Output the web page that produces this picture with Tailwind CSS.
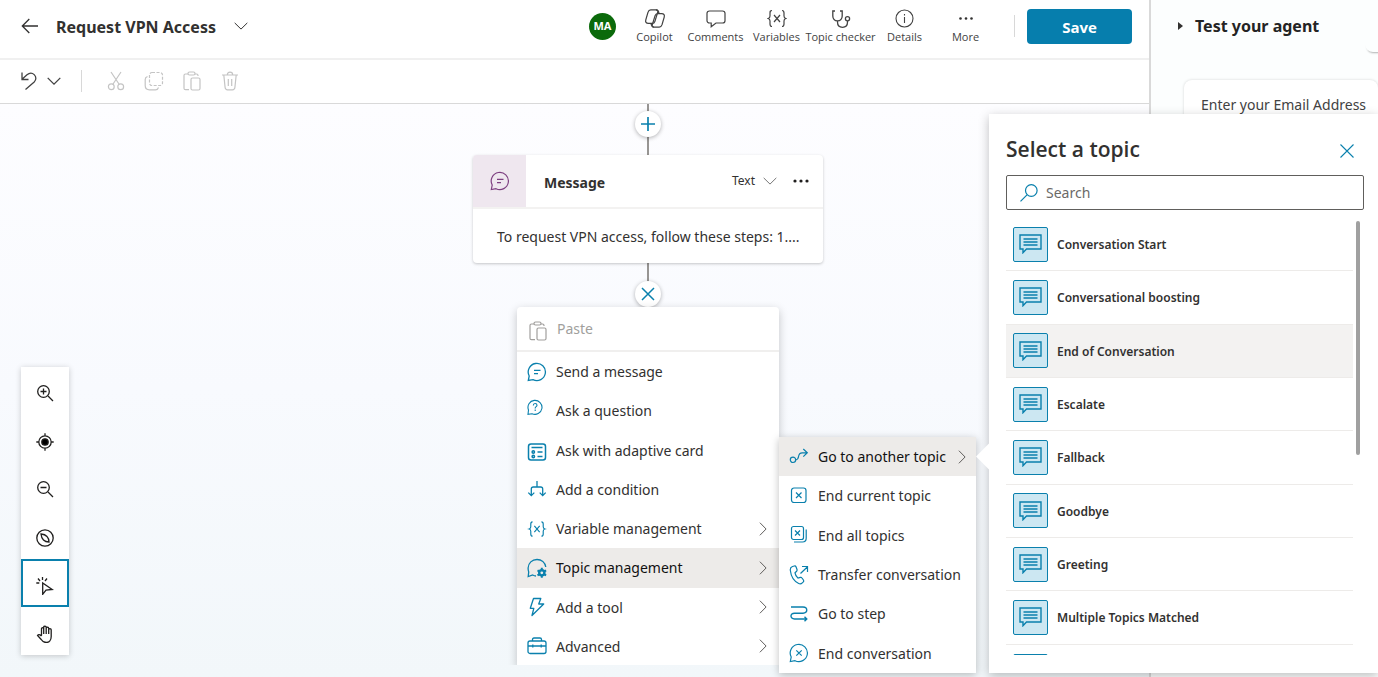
<!DOCTYPE html>
<html lang="en">
<head>
<meta charset="utf-8">
<meta name="viewport" content="width=device-width, initial-scale=1">
<title>Request VPN Access</title>
<script src="https://cdn.jsdelivr.net/npm/@tailwindcss/browser@4"></script>
</head>
<body class="relative flex h-screen overflow-hidden bg-white font-['Noto_Sans','Open_Sans',sans-serif] text-[#323130]">

<svg class="hidden" aria-hidden="true">
  <symbol id="chev-down" viewBox="0 0 14 8"><path d="M.7.9 7 7.1 13.3.9" /></symbol>
  <symbol id="chev-right" viewBox="0 0 8 14"><path d="M.9.7 7.1 7 .9 13.3" /></symbol>
  <symbol id="paste" viewBox="0 0 18 20"><path d="M5 3H2.5C1.7 3 1 3.7 1 4.5v12.700c0 .8.7 1.500 1.500 1.500H6M12 3h1.500c.8 0 1.500.7 1.500 1.500V5"/><rect x="5" y="1" width="7" height="3" rx="1.500"/><rect x="8" y="7" width="9" height="12" rx="1.500"/></symbol>
  <symbol id="message" viewBox="0 0 20 20"><path d="M1.300 18.500 2.200 14A8.600 8.600 0 1 1 6 17.700L1.300 18.500ZM7 8.300h6.500M7 11.700h4"/></symbol>
  <symbol id="vars" viewBox="0 0 20 18"><path d="M5 1C3.200 1 3 2 3 3.500v3C3 8 2.300 8.700 1.200 9 2.300 9.300 3 10 3 11.500v3C3 16 3.200 17 5 17M15 1c1.800 0 2 1 2 2.500v3c0 1.500.7 2.200 1.800 2.500-1.100.3-1.800 1-1.800 2.500v3c0 1.500-.2 2.500-2 2.500M7 5.500l6 7M13 5.500l-6 7"/></symbol>
  <symbol id="topic" viewBox="0 0 23 20"><path d="M1 1h21v14H7.500L4 18.700V15H1Z"/><path d="M4.500 5h14M4.500 8h14M4.500 11h14"/></symbol>
</svg>

<div class="flex min-w-0 flex-1 flex-col">
  <header class="flex h-[60px] shrink-0 items-center border-b-2 border-[#f0f0f0] pr-[17px] pb-1.5 pl-[21px]">
    <button aria-label="Back"><svg class="h-4 w-[18px] fill-none stroke-[#323130]" viewBox="0 0 18 16"><path d="M17 8H1.500M8.300 1 1.300 8l7 7" stroke-width="1.300"/></svg></button>
    <h1 class="ml-[17px] pt-0.5 text-[16px] font-bold whitespace-nowrap">Request VPN Access</h1>
    <button class="ml-[18px]" aria-label="Topic options"><svg class="h-2 w-3.5 fill-none stroke-[#323130]"><use href="#chev-down"/></svg></button>
    <div class="ml-auto flex items-center">
      <span class="mr-2 flex size-[27px] items-center justify-center rounded-full bg-[#0b6a0b] text-[11px] font-bold text-white">MA</span>
      <nav class="flex pt-0.5 font-['Open_Sans',sans-serif] text-[11px] leading-4 whitespace-nowrap text-[#424242]">
        <button class="flex w-[61px] flex-col items-center gap-px"><svg class="h-[19px] w-[22px] fill-none stroke-[#424242]" viewBox="0 0 22 20" stroke-width="1.300"><path d="M6.500 1h6c1.400 0 1.800.9 1.400 2.300l-3 9.700c-.5 1.600-1.300 2.200-2.700 2.200H4c-2.400 0-3.300-1.500-2.700-3.700l2.300-8C4.100 1.900 5 1 6.500 1Z"/><path d="M15.500 19h-6c-1.400 0-1.800-.9-1.400-2.300l3-9.700c.5-1.600 1.300-2.200 2.700-2.200H18c2.400 0 3.300 1.500 2.700 3.700l-2.300 8c-.5 1.600-1.400 2.500-2.900 2.500Z"/><path d="M12 1c2.200 0 2.700 1 3.300 3.800M10 19c-2.200 0-2.700-1-3.300-3.800"/></svg>Copilot</button>
        <button class="flex w-[61px] flex-col items-center gap-px"><svg class="h-[19px] w-[20px] fill-none stroke-[#424242]" viewBox="0 0 20 19" stroke-width="1.200"><path d="M3.500 2h13C17.900 2 19 3.100 19 4.300v7.400c0 1.200-1.100 2.300-2.500 2.300H10l-4.800 3.700V14H3.500C2.100 14 1 12.900 1 11.700V4.300C1 3.100 2.100 2 3.500 2Z"/></svg>Comments</button>
        <button class="flex w-[61px] flex-col items-center gap-px"><svg class="h-[19px] w-[20px] fill-none stroke-[#424242]" stroke-width="1.200"><use href="#vars"/></svg>Variables</button>
        <button class="flex w-[67px] flex-col items-center gap-px"><svg class="h-[19px] w-[20px] fill-none stroke-[#424242]" viewBox="0 0 20 19" stroke-width="1.300"><path d="M4 2H1.800v5c0 2.800 1.900 4.800 4.700 4.800s4.700-2 4.700-4.800V2H9M6.500 11.800V13c0 3 1.700 5.300 5 5.300s5-2.300 5-5.300v-1"/><circle cx="16.500" cy="9.800" r="2.100"/></svg>Topic checker</button>
        <button class="flex w-[61px] flex-col items-center gap-px"><svg class="h-[19px] w-[19px] fill-none stroke-[#424242]" viewBox="0 0 19 19" stroke-width="1.100"><circle cx="9.500" cy="9.500" r="8.500"/><path d="M9.500 8v6M9.500 5v1.500"/></svg>Details</button>
        <button class="flex w-[61px] flex-col items-center gap-px"><svg class="h-[19px] w-[16px] fill-[#323130]" viewBox="0 0 16 19"><circle cx="2.500" cy="9.500" r="1.300"/><circle cx="8" cy="9.500" r="1.300"/><circle cx="13.500" cy="9.500" r="1.300"/></svg>More</button>
      </nav>
      <div class="mr-3 ml-[18px] h-[22px] w-px bg-[#d8d8d8]"></div>
      <button class="h-[35px] w-[105px] rounded bg-[#067ead] pt-0.5 font-['Open_Sans',sans-serif] text-[15px] font-bold text-white">Save</button>
    </div>
  </header>

  <div class="flex h-11 shrink-0 items-center border-b border-[#d9d9d9] pb-0.5 pl-[21px]">
    <button aria-label="Undo"><svg class="h-[18px] w-4 fill-none stroke-[#424242]" viewBox="0 0 16 18" stroke-width="1.300"><path d="M1 .5v7h6.500M1.300 7 6 2.800c2.300-2 5.300-2 7.200-.2 2.200 2.100 2.200 5.300 0 7.400L4.500 17.500"/></svg></button>
    <button class="ml-2.5" aria-label="Undo history"><svg class="h-2 w-3.5 fill-none stroke-[#424242]" stroke-width="1.300"><use href="#chev-down"/></svg></button>
    <div class="mr-6 ml-5 h-[22px] w-px bg-[#d8d8d8]"></div>
    <div class="flex gap-[18px]">
      <button class="flex w-5 justify-center" disabled aria-label="Cut"><svg class="h-5 w-[18px] fill-none stroke-[#c4c4c4]" viewBox="0 0 18 20" stroke-width="1.200"><path d="m4 1 8.300 12.500M14 1 5.700 13.500"/><circle cx="4.300" cy="15.800" r="2.900"/><circle cx="13.700" cy="15.800" r="2.900"/></svg></button>
      <button class="flex w-5 justify-center" disabled aria-label="Copy"><svg class="h-5 w-5 fill-none stroke-[#c4c4c4]" viewBox="0 0 20 20" stroke-width="1.200"><rect x="5.500" y="1.500" width="13" height="13" rx="2.500" stroke-dasharray="3 1.500"/><path d="M3.500 5.500C2 6 1.200 7 1.200 8.500v6c0 2.500 1.800 4.300 4.300 4.300h6c1.500 0 2.500-.8 3-2.300"/></svg></button>
      <button class="flex w-5 justify-center" disabled aria-label="Paste"><svg class="h-5 w-[18px] fill-none stroke-[#c4c4c4]" stroke-width="1.200"><use href="#paste"/></svg></button>
      <button class="flex w-5 justify-center" disabled aria-label="Delete"><svg class="h-5 w-[18px] fill-none stroke-[#c4c4c4]" viewBox="0 0 18 20" stroke-width="1.200"><path d="M1 4h16M6.300 4c0-1.800 1-2.800 2.700-2.800s2.700 1 2.700 2.800M2.800 4l1.300 12.500c.2 1.500 1 2.300 2.400 2.300h5c1.400 0 2.200-.8 2.400-2.300L15.200 4M7.300 8v7M10.700 8v7"/></svg></button>
    </div>
  </div>

  <!-- Authoring canvas: nodes sit at free coordinates -->
  <main class="relative min-h-0 flex-1 bg-linear-to-b from-[#fdfdff] via-[#f8fafe] to-[#f2f7fa]">
    <div class="absolute inset-x-0 top-0 bottom-3 overflow-hidden">
      <div class="absolute top-0 left-[647px] h-[200px] w-0.5 bg-[#979593]"></div>
      <button class="absolute top-[7px] left-[635px] flex size-[26px] items-center justify-center rounded-full bg-white shadow-[0_1px_4px_rgba(0,0,0,0.3)]" aria-label="Add node"><svg class="size-3.5 stroke-[#0a80ad]" viewBox="0 0 14 14" stroke-width="1.700"><path d="M7 0v14M0 7h14"/></svg></button>

      <article class="absolute top-[51px] left-[473px] w-[350px] rounded bg-white shadow-[0_1px_3px_rgba(0,0,0,0.22)]">
        <div class="flex h-[54px] items-center border-b-2 border-[#f3f2f1]">
          <span class="flex h-full w-[53px] items-center justify-center rounded-tl bg-[#efe7ef]"><svg class="size-5 fill-none stroke-[#7d3f80]" stroke-width="1.200"><use href="#message"/></svg></span>
          <h2 class="ml-[18px] pt-0.5 text-[14px] font-bold">Message</h2>
          <button class="ml-auto flex items-center gap-2 text-[12px]">Text <svg class="h-2 w-3.5 fill-none stroke-[#767676]"><use href="#chev-down"/></svg></button>
          <button class="mr-3.5 ml-4" aria-label="More options"><svg class="h-4 w-4 fill-[#201f1e]" viewBox="0 0 16 16"><circle cx="2" cy="8" r="1.600"/><circle cx="8" cy="8" r="1.600"/><circle cx="14" cy="8" r="1.600"/></svg></button>
        </div>
        <p class="h-[54px] truncate pl-6 text-[14px] leading-[56px]">To request VPN access, follow these steps: 1....</p>
      </article>

      <button class="absolute top-[177px] left-[635px] flex size-[26px] items-center justify-center rounded-full bg-white shadow-[0_1px_4px_rgba(0,0,0,0.3)]" aria-label="Close menu"><svg class="size-3.5 stroke-[#0a80ad]" viewBox="0 0 14 14" stroke-width="1.500"><path d="m1 1 12 12M13 1 1 13"/></svg></button>

      <div class="absolute top-[203px] left-[517px] w-[262px] rounded-t-sm bg-white text-[14px] shadow-[0_3px_10px_rgba(0,0,0,0.22)]">
        <button class="flex h-[45px] w-full items-center gap-2.5 border-b-2 border-[#f0efee] pl-3 text-[#a19f9d]" disabled><svg class="mt-1 h-5 w-[18px] fill-none stroke-[#a19f9d]" stroke-width="1.200"><use href="#paste"/></svg>Paste</button>
        <div class="grid h-[314px] grid-rows-8 fill-none stroke-[#0a80ad] stroke-[1.3]">
          <button class="flex items-center gap-[9px] pr-3 pl-2.5"><svg class="size-5"><use href="#message"/></svg>Send a message</button>
          <button class="flex items-center gap-[9px] pr-3 pl-2.5"><svg class="mb-1 size-5" viewBox="0 0 20 20" stroke-width="1.100"><path d="M1 15.300 1.500 11A7 7 0 1 1 5 14.700L1 15.300Z"/><path d="M6.300 6.500C6.300 5.200 7 4.500 8.100 4.500s1.900.7 1.900 1.700c0 1.300-1.800 1.500-1.800 2.900v.4M8.200 10.600v1.300"/></svg>Ask a question</button>
          <button class="flex items-center gap-[9px] pr-3 pl-2.5"><svg class="mt-1 size-5" viewBox="0 0 20 20" stroke-width="1.500"><rect x="1.500" y="2" width="17" height="16" rx="2.500"/><path d="M4.500 5.500h11M10.500 10h5M10.500 14.500h5"/><circle cx="6.300" cy="10" r="1.200"/><circle cx="6.300" cy="14.500" r="1.200"/></svg>Ask with adaptive card</button>
          <button class="flex items-center gap-[9px] pr-3 pl-2.5"><svg class="size-5" viewBox="0 0 20 20"><path d="M10 2v6M4.300 16.500V10c0-1.300.7-2 2-2h7.400c1.300 0 2 .7 2 2v6.500M1.300 13.600l3 3 3-3M12.700 13.600l3 3 3-3"/></svg>Add a condition</button>
          <button class="flex items-center gap-[9px] pr-3 pl-2.5"><svg class="h-4 w-5"><use href="#vars"/></svg>Variable management<svg class="ml-auto h-3.5 w-2 stroke-[#605e5c] stroke-1"><use href="#chev-right"/></svg></button>
          <button class="flex items-center gap-[9px] bg-[#edebe9] pr-3 pl-2.5 text-[#111]"><svg class="size-5" viewBox="0 0 20 20"><path d="M9 18c-1.200-.1-2.300-.5-3.300-1L1.200 18.500l.5-4.500c-.4-1-.6-2.500-.6-4 .2-5 4-8.500 8.900-8.500 4.500 0 8 3 8.800 7.500"/><circle cx="14.800" cy="14.800" r="2.600" fill="#edebe9" stroke-width="2.400"/><path d="M14.800 9.800v2M14.800 17.800v2M10.500 12.300l1.700 1M17.400 16.300l1.700 1M10.500 17.300l1.700-1M17.400 13.300l1.700-1" stroke-width="2"/></svg>Topic management<svg class="ml-auto h-3.5 w-2 stroke-[#605e5c] stroke-1"><use href="#chev-right"/></svg></button>
          <button class="flex items-center gap-[9px] pr-3 pl-2.5"><svg class="size-5" viewBox="0 0 20 20"><path d="M6.500 1.500h7.300L11.700 7h5L5 18.500l1.800-7.200H3.300L6.500 1.500Z" stroke-linejoin="round"/></svg>Add a tool<svg class="ml-auto h-3.5 w-2 stroke-[#605e5c] stroke-1"><use href="#chev-right"/></svg></button>
          <button class="flex items-center gap-[9px] pr-3 pl-2.5"><svg class="size-5" viewBox="0 0 20 20"><rect x="1" y="5" width="18" height="12.500" rx="2"/><path d="M5.500 5V3.500c0-1 .5-1.500 1.500-1.500h6c1 0 1.500.5 1.500 1.500V5M1 10h18M5.800 8.500v3M14.200 8.500v3"/></svg>Advanced<svg class="ml-auto h-3.5 w-2 stroke-[#605e5c] stroke-1"><use href="#chev-right"/></svg></button>
        </div>
      </div>

      <div class="absolute top-[263px] left-[21px] flex w-12 flex-col bg-white fill-none stroke-[#201f1e] stroke-[1.3] shadow-[0_1px_6px_rgba(0,0,0,0.2)]">
        <button class="flex h-12 items-center justify-center pt-1" aria-label="Zoom in"><svg class="size-[18px]" viewBox="0 0 18 18"><circle cx="7.500" cy="7.500" r="5.800"/><path d="m12 12 5 5M4.500 7.500h6M7.500 4.500v6"/></svg></button>
        <button class="flex h-12 items-center justify-center pt-1.5" aria-label="Center"><svg class="size-[18px]" viewBox="0 0 18 18"><circle cx="9" cy="9" r="6.200"/><circle cx="9" cy="9" r="3.200" class="fill-black"/><path d="M9 .3v2.500M9 15.200v2.500M.3 9h2.500M15.200 9h2.500"/></svg></button>
        <button class="flex h-12 items-center justify-center pt-1" aria-label="Zoom out"><svg class="size-[18px]" viewBox="0 0 18 18"><circle cx="7.500" cy="7.500" r="5.800"/><path d="m12 12 5 5M4.500 7.500h6"/></svg></button>
        <button class="flex h-12 items-center justify-center pt-1.5" aria-label="Minimap"><svg class="size-[18px]" viewBox="0 0 18 18"><circle cx="9" cy="9" r="8.200"/><path d="M5 5c3.500.3 4.800 1.200 6 2.500 1.200 1.200 1.900 3 2 5.500-2.500 0-4.300-.8-5.500-2C6.200 9.700 5.300 8.500 5 5Z"/></svg></button>
        <button class="flex h-12 items-center justify-center border-2 border-[#0a80ad] pt-1.5" aria-label="Select"><svg class="size-[18px]" viewBox="0 0 18 18"><path d="M6.700 6v11.300l3.300-4.200 6.200-.6L6.700 6Z"/><path d="M6.500 0v3M2 1.500l2 2.500M11 1.500 9 4M.3 6h3"/></svg></button>
        <button class="flex h-12 items-center justify-center pt-1.5" aria-label="Pan"><svg class="size-[18px]" viewBox="0 0 18 18"><path d="M5.500 10.500V3.700c0-1.500 2.200-1.500 2.200 0V2.200c0-1.500 2.500-1.500 2.500 0v1c0-1.500 2.500-1.500 2.500 0v1.500c0-1.500 2.500-1.500 2.500 0v6.800c0 3.500-2 6-5 6-2.300 0-3.700-1-5-3L1.500 10.500c.8-1.300 2.500-1.200 4 .7M7.700 3.700V9M10.200 3V9M12.700 4.500V9"/></svg></button>
      </div>
    </div>

    <!-- Topic management submenu -->
    <div class="absolute top-[333px] left-[779px] grid h-[236px] w-[197px] grid-rows-6 bg-white fill-none stroke-[#0a80ad] stroke-[1.2] text-[14px] whitespace-nowrap shadow-[0_2px_8px_rgba(0,0,0,0.25)]">
      <button class="flex items-center gap-[9px] bg-[#edebe9] pr-2.5 pl-2.5 text-[#111]"><svg class="size-5 shrink-0" viewBox="0 0 20 20"><circle cx="4" cy="12.800" r="2.700"/><path d="M6.700 12.800c5 0 .5-7 6.500-7H18M14.300 2l4 3.800-4 3.800"/></svg>Go to another topic<svg class="ml-auto h-3.5 w-2 shrink-0 stroke-[#605e5c] stroke-1"><use href="#chev-right"/></svg></button>
      <button class="flex items-center gap-[9px] pl-2.5"><svg class="size-5" viewBox="0 0 20 20"><rect x="2.500" y="2" width="14.500" height="14.500" rx="2.500"/><path d="m7 6.500 5.500 5.500M12.500 6.500 7 12"/></svg>End current topic</button>
      <button class="flex items-center gap-[9px] pl-2.5"><svg class="size-5" viewBox="0 0 20 20"><rect x="2.500" y="1.500" width="12" height="13" rx="2"/><path d="m6 5.500 5 5M11 5.500l-5 5M5 17h8.500c2.200 0 3.700-1.400 3.700-3.700V4.500"/></svg>End all topics</button>
      <button class="flex items-center gap-[9px] pl-2.5"><svg class="size-5" viewBox="0 0 20 20"><path d="M3.500 1.500 5.300 1c.8-.2 1.500.2 1.800 1L8 4.500c.3.800 0 1.300-.4 1.800L6 7.800c.3 2 1.500 4 3 5.300l2.300-.7c.7-.2 1.300 0 1.700.6l1.400 2c.4.600.4 1.300-.1 1.900l-1 1c-1 1-2.300 1.300-3.600.6C5 16.300 2 11.300 1.300 5.300c-.2-1.900.6-3.300 2.200-3.800ZM11.500 8.500 18.300 2M13 1.500h5.500V7"/></svg>Transfer conversation</button>
      <button class="flex items-center gap-[9px] pl-2.5"><svg class="size-5" viewBox="0 0 20 20" stroke-width="1.400"><path d="M2 3h12c5 0 5 6.200 0 6.200H5.500c-4.700 0-4.700 5.800 0 5.800h12M15.500 12.700l2.300 2.300-2.300 2.300"/></svg>Go to step</button>
      <button class="flex items-center gap-[9px] pl-2.5"><svg class="size-5" viewBox="0 0 20 20"><path d="M1.300 18.500 2.200 14A8.600 8.600 0 1 1 6 17.700L1.300 18.500ZM7.300 7.300l5.400 5.400M12.700 7.300l-5.400 5.400"/></svg>End conversation</button>
    </div>
  </main>
</div>

<aside class="w-[229px] shrink-0 overflow-hidden border-l-2 border-[#d9d9d9] bg-[#fcfefe]">
  <div class="relative flex h-[52px] items-center gap-3 pl-[27px]">
    <svg class="h-2 w-[5px] fill-[#323130]" viewBox="0 0 5 8"><path d="M0 0 5 4 0 8Z"/></svg>
    <h2 class="text-[16px] font-bold whitespace-nowrap text-[#242424]">Test your agent</h2>
    <span class="absolute right-[-27px] bottom-0 size-10 rounded-lg shadow-[0_3px_2px_-2px_rgba(0,0,0,0.3)]"></span>
  </div>
  <p class="mt-7 ml-[33px] h-24 rounded-lg bg-white pt-3.5 pl-[17px] text-[14px] whitespace-nowrap text-[#424242] shadow-[0_0_3px_rgba(0,0,0,0.16)]">Enter your Email Address</p>
</aside>

<!-- Topic picker callout -->
<section class="absolute top-[114px] right-0 w-[389px] bg-white pt-5 pr-3.5 pb-[18px] pl-[17px] shadow-[0_3px_10px_rgba(0,0,0,0.25)]" aria-label="Select a topic">
  <span class="absolute top-[333px] left-[-9px] size-[19px] rotate-45 bg-white"></span>
  <div class="relative">
    <div class="flex h-[41px] items-start justify-between pr-2.5">
      <h2 class="font-['Open_Sans',sans-serif] text-[21px] leading-[30px] font-semibold">Select a topic</h2>
      <button class="mt-2.5" aria-label="Close"><svg class="size-3.5 stroke-[#0a80ad]" viewBox="0 0 14 14" stroke-width="1.100"><path d="m.5.5 13 13M13.500.5l-13 13"/></svg></button>
    </div>
    <label class="flex h-[35px] items-center gap-2 rounded-xs border border-[#605e5c] pl-[13px]">
      <svg class="size-[18px] fill-none stroke-[#0a80ad]" viewBox="0 0 18 18" stroke-width="1.200"><circle cx="11.300" cy="6.500" r="5.800"/><path d="M7 10.800.5 17.300"/></svg>
      <input class="min-w-0 flex-1 text-[14px] placeholder:text-[#6b6967] focus:outline-none" type="text" placeholder="Search" aria-label="Search">
    </label>
    <div class="mt-2 flex h-[437px] justify-between overflow-hidden pr-1">
      <div class="grid h-[480px] flex-1 grid-rows-9 text-[12px] font-semibold">
        <button class="flex items-center gap-[9px] border-b border-[#edebe9] pl-[7px]"><span class="flex size-[35px] items-center justify-center rounded-xs border border-[#0a80ad] bg-[#cce7f2]"><svg class="h-5 w-[23px] fill-none stroke-[#0a80ad] stroke-[1.4]"><use href="#topic"/></svg></span><span class="pt-0.5">Conversation Start</span></button>
        <button class="flex items-center gap-[9px] border-b border-[#edebe9] pl-[7px]"><span class="flex size-[35px] items-center justify-center rounded-xs border border-[#0a80ad] bg-[#cce7f2]"><svg class="h-5 w-[23px] fill-none stroke-[#0a80ad] stroke-[1.4]"><use href="#topic"/></svg></span><span class="pt-0.5">Conversational boosting</span></button>
        <button class="flex items-center gap-[9px] border-b border-[#edebe9] bg-[#f3f2f1] pl-[7px]"><span class="flex size-[35px] items-center justify-center rounded-xs border border-[#0a80ad] bg-[#cce7f2]"><svg class="h-5 w-[23px] fill-none stroke-[#0a80ad] stroke-[1.4]"><use href="#topic"/></svg></span><span class="pt-0.5">End of Conversation</span></button>
        <button class="flex items-center gap-[9px] border-b border-[#edebe9] pl-[7px]"><span class="flex size-[35px] items-center justify-center rounded-xs border border-[#0a80ad] bg-[#cce7f2]"><svg class="h-5 w-[23px] fill-none stroke-[#0a80ad] stroke-[1.4]"><use href="#topic"/></svg></span><span class="pt-0.5">Escalate</span></button>
        <button class="flex items-center gap-[9px] border-b border-[#edebe9] pl-[7px]"><span class="flex size-[35px] items-center justify-center rounded-xs border border-[#0a80ad] bg-[#cce7f2]"><svg class="h-5 w-[23px] fill-none stroke-[#0a80ad] stroke-[1.4]"><use href="#topic"/></svg></span><span class="pt-0.5">Fallback</span></button>
        <button class="flex items-center gap-[9px] border-b border-[#edebe9] pl-[7px]"><span class="flex size-[35px] items-center justify-center rounded-xs border border-[#0a80ad] bg-[#cce7f2]"><svg class="h-5 w-[23px] fill-none stroke-[#0a80ad] stroke-[1.4]"><use href="#topic"/></svg></span><span class="pt-0.5">Goodbye</span></button>
        <button class="flex items-center gap-[9px] border-b border-[#edebe9] pl-[7px]"><span class="flex size-[35px] items-center justify-center rounded-xs border border-[#0a80ad] bg-[#cce7f2]"><svg class="h-5 w-[23px] fill-none stroke-[#0a80ad] stroke-[1.4]"><use href="#topic"/></svg></span><span class="pt-0.5">Greeting</span></button>
        <button class="flex items-center gap-[9px] border-b border-[#edebe9] pl-[7px]"><span class="flex size-[35px] items-center justify-center rounded-xs border border-[#0a80ad] bg-[#cce7f2]"><svg class="h-5 w-[23px] fill-none stroke-[#0a80ad] stroke-[1.4]"><use href="#topic"/></svg></span><span class="pt-0.5">Multiple Topics Matched</span></button>
        <span class="flex items-center pl-[7px]"><span class="size-[35px] rounded-xs border border-[#0a80ad] bg-[#cce7f2]"></span></span>
      </div>
      <div class="mt-[3px] ml-[3px] h-[234px] w-1 rounded-full bg-[#a0a0a0]"></div>
    </div>
  </div>
</section>
</body>
</html>
